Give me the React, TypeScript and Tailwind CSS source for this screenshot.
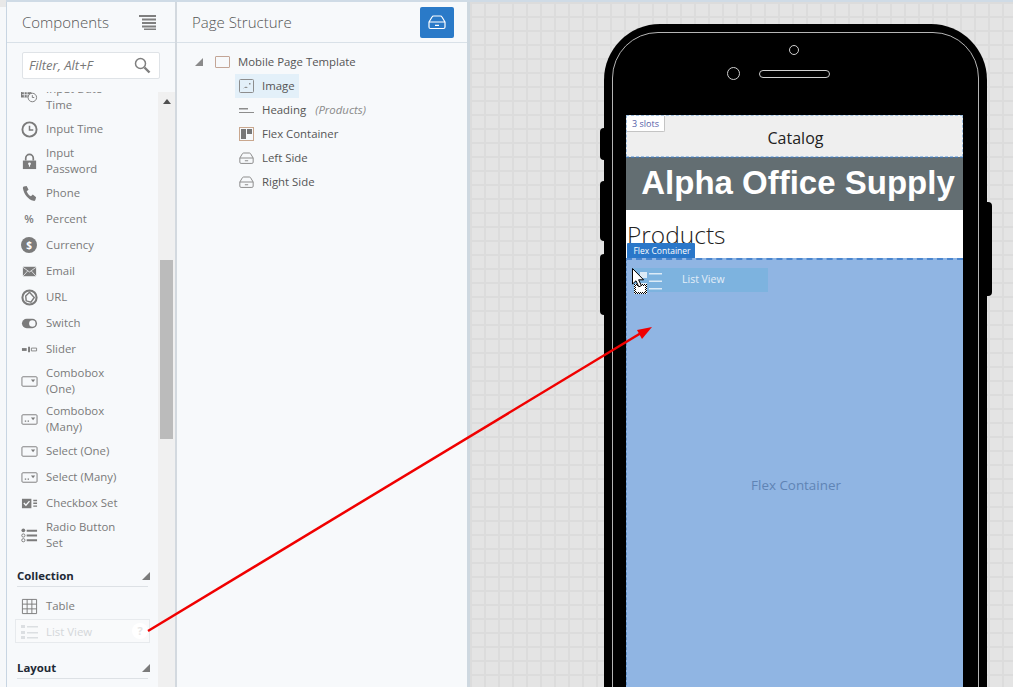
import type { ReactNode } from "react";

const GRAY = "#7b7b7b";

function Icon({ children }: { children: ReactNode }) {
  return (
    <svg width="17" height="17" viewBox="0 0 18 18" className="shrink-0" aria-hidden="true">
      {children}
    </svg>
  );
}

const DropBox = ({ many }: { many?: boolean }) => (
  <Icon>
    <rect x="1" y="4" width="16" height="10" rx="1" fill="none" stroke={GRAY} />
    <path d="M10.500 7h4.500l-2.200 2.800z" fill={GRAY} />
    {many ? <path d="M4 10h1.500v1.500H4zM7 10h1.500v1.500H7z" fill={GRAY} /> : null}
  </Icon>
);

const icons: Record<string, ReactNode> = {
  date: (
    <Icon>
      <path d="M0 0h11v9H0z" fill={GRAY} />
      <path d="M1 3h9M3.500 3v6M6.500 3v6M1 6h9" stroke="#f7f9fb" strokeWidth="0.8" />
      <circle cx="12" cy="9" r="4.500" fill="#f7f9fb" stroke={GRAY} />
      <path d="M12 6.500V9h2" fill="none" stroke={GRAY} />
    </Icon>
  ),
  time: (
    <Icon>
      <circle cx="9" cy="9" r="7.500" fill="none" stroke={GRAY} strokeWidth="2" />
      <path d="M9 5v4.500h4" fill="none" stroke={GRAY} strokeWidth="1.600" />
    </Icon>
  ),
  lock: (
    <Icon>
      <path d="M5 8V5.500a4 4 0 0 1 8 0V8" fill="none" stroke={GRAY} strokeWidth="1.800" />
      <path d="M2 8h14v9H2z" fill={GRAY} />
      <circle cx="9" cy="11.500" r="1.500" fill="#f7f9fb" />
      <path d="M8.400 12h1.200v2.500H8.400z" fill="#f7f9fb" />
    </Icon>
  ),
  phone: (
    <Icon>
      <path d="M3 1.500 6 1l2 4-2 1.500c.8 2.400 2.400 4.300 4.500 5.500L12.500 10l3.500 3-.8 3c-.3.8-1.200 1-2 .8C7.500 15.500 3 9.500 2 3.500c-.1-1 .2-1.700 1-2z" fill={GRAY} />
    </Icon>
  ),
  percent: (
    <span className="flex w-[16px] shrink-0 justify-center text-[11px] font-semibold text-[#7b7b7b]">%</span>
  ),
  currency: (
    <span className="flex h-[16px] w-[16px] shrink-0 items-center justify-center rounded-full bg-[#7b7b7b] text-[10px] font-bold text-white">
      $
    </span>
  ),
  email: (
    <Icon>
      <path d="M2 4h14v10H2z" fill={GRAY} />
      <path d="m2 4.500 7 5 7-5M2 14l5-5.500M16 14l-5-5.500" fill="none" stroke="#f7f9fb" strokeWidth="0.8" />
    </Icon>
  ),
  url: (
    <Icon>
      <circle cx="9" cy="9" r="7.500" fill="none" stroke={GRAY} strokeWidth="2.200" />
      <path d="M9 3.500 14 9l-3.500 5-5-1.500-.5-5z" fill="none" stroke={GRAY} strokeWidth="1.500" />
    </Icon>
  ),
  switch: (
    <Icon>
      <rect x="1" y="4" width="16" height="10" rx="5" fill={GRAY} />
      <circle cx="12" cy="9" r="3.400" fill="#f7f9fb" />
    </Icon>
  ),
  slider: (
    <Icon>
      <path d="M1 7.500h5v3H1z" fill={GRAY} />
      <path d="M7.500 6h2v6h-2z" fill={GRAY} />
      <path d="M11 7.500h5.500v3H11z" fill="none" stroke={GRAY} strokeWidth="0.9" />
    </Icon>
  ),
  combo: <DropBox />,
  comboMany: <DropBox many />,
  checkbox: (
    <Icon>
      <path d="M1 4h10v10H1z" fill={GRAY} />
      <path d="m3 8.500 2.200 2.300L9 6.500" fill="none" stroke="#f7f9fb" strokeWidth="1.400" />
      <path d="M13 5h4v1.500h-4zM13 8h4v1.500h-4zM13 11h4v1.500h-4z" fill={GRAY} />
    </Icon>
  ),
  radio: (
    <Icon>
      <circle cx="2.500" cy="3.500" r="2" fill={GRAY} />
      <circle cx="2.500" cy="9" r="1.700" fill="none" stroke={GRAY} />
      <circle cx="2.500" cy="14" r="1.700" fill="none" stroke={GRAY} />
      <path d="M6 3h11v2H6zM6 8h11v2H6zM6 13h11v2H6z" fill={GRAY} />
    </Icon>
  ),
  table: (
    <Icon>
      <path d="M1.500 1.500h15v15h-15zM1.500 6.500h15M1.500 11.500h15M6.500 1.500v15M11.500 1.500v15" fill="none" stroke={GRAY} />
    </Icon>
  ),
};

const items = [
  { icon: "date", lines: ["Input Date", "Time"] },
  { icon: "time", lines: ["Input Time"] },
  { icon: "lock", lines: ["Input", "Password"] },
  { icon: "phone", lines: ["Phone"] },
  { icon: "percent", lines: ["Percent"] },
  { icon: "currency", lines: ["Currency"] },
  { icon: "email", lines: ["Email"] },
  { icon: "url", lines: ["URL"] },
  { icon: "switch", lines: ["Switch"] },
  { icon: "slider", lines: ["Slider"] },
  { icon: "combo", lines: ["Combobox", "(One)"] },
  { icon: "comboMany", lines: ["Combobox", "(Many)"] },
  { icon: "combo", lines: ["Select (One)"] },
  { icon: "comboMany", lines: ["Select (Many)"] },
  { icon: "checkbox", lines: ["Checkbox Set"] },
  { icon: "radio", lines: ["Radio Button", "Set"] },
];

function ComponentRow({ icon, lines }: { icon: string; lines: string[] }) {
  return (
    <div
      className={
        lines.length > 1
          ? "flex h-[38px] items-center gap-[7px] pl-[14px] text-[11.4px] leading-4 text-[#7a7a7a]"
          : "flex h-[26px] items-center gap-[7px] pl-[14px] text-[11.4px] leading-4 text-[#7a7a7a]"
      }
    >
      <span className="flex w-[18px] shrink-0 justify-start">{icons[icon]}</span>
      <div>
        {lines.map((line) => (
          <div key={line}>{line}</div>
        ))}
      </div>
    </div>
  );
}

function SectionHeading({ label }: { label: string }) {
  return (
    <div className="ml-[10px] flex h-[22px] w-[131px] items-center justify-between border-b border-[#dde1e5] pt-[1px] text-[11.4px] font-bold text-[#1f2a36]">
      <span>{label}</span>
      <svg width="8" height="8" viewBox="0 0 8 8" className="-mr-[2px]" aria-hidden="true">
        <path d="M8 0v8H0z" fill="#7b7b7b" />
      </svg>
    </div>
  );
}

function InboxIcon({ color, size }: { color: string; size: number }) {
  return (
    <svg width={size} height={size} viewBox="0 0 18 18" aria-hidden="true">
      <path
        d="M1 9 4 4q.5-1 1.500-1h7q1 0 1.500 1l3 5v5q0 1.500-1.500 1.500h-13Q1 15.500 1 14zM1 9h16M7 12.300h4"
        fill="none"
        stroke={color}
        strokeWidth="1.200"
        strokeLinejoin="round"
      />
    </svg>
  );
}

const treeIcons: Record<string, ReactNode> = {
  image: (
    <svg width="15" height="14" viewBox="0 0 15 14" aria-hidden="true">
      <rect x="0.500" y="0.500" width="14" height="13" rx="1" fill="none" stroke="#8d8d8d" />
      <path d="M4 9.500 7 7.500l2 1.500H4zM10 4h1.500v1.500H10z" fill="#8d8d8d" />
    </svg>
  ),
  heading: (
    <svg width="15" height="14" viewBox="0 0 15 14" aria-hidden="true">
      <path d="M0 5h9v1.500H0zM0 9h15v1H0z" fill="#8d8d8d" />
    </svg>
  ),
  flex: (
    <svg width="15" height="14" viewBox="0 0 15 14" aria-hidden="true">
      <rect x="0.500" y="0.500" width="14" height="13" fill="none" stroke="#c9a78e" />
      <path d="M2 2h5v10H2zM8 2h5v5H8z" fill="#777" />
    </svg>
  ),
  inbox: <InboxIcon color="#8d8d8d" size={18} />,
};

const treeRows = [
  { icon: "image", label: "Image", selected: true },
  { icon: "heading", label: "Heading", note: "(Products)" },
  { icon: "flex", label: "Flex Container" },
  { icon: "inbox", label: "Left Side" },
  { icon: "inbox", label: "Right Side" },
];

function ComponentsPanel() {
  return (
    <aside className="flex h-full w-[169px] shrink-0 flex-col border-l border-[#c8d5e2] bg-[#f7f9fb]">
      <header className="flex h-[41px] shrink-0 items-center justify-between border-b border-[#d9e1e8] pl-[15px] pr-[19px] pt-[1px]">
        <span className="text-[15px] font-light text-[#555]">Components</span>
        <svg width="17" height="15" viewBox="0 0 17 15" aria-hidden="true">
          <path d="M0 0h17v2H0zM3 3.500h14v2H3zM3 7h14v2H3zM3 10.500h14v2H3zM5 13.500h12v1.500H5z" fill="#7f7f7f" />
        </svg>
      </header>
      <div className="h-[49px] shrink-0 pl-[15px] pt-[9px]">
        <div className="flex h-[27px] w-[138px] items-center justify-between rounded-[2px] border border-[#dfe3e7] bg-white pl-[6px] pr-[8px]">
          <span className="text-[13px] italic text-[#777]">Filter, Alt+F</span>
          <svg width="17" height="17" viewBox="0 0 17 17" aria-hidden="true">
            <circle cx="6.500" cy="6.500" r="5" fill="none" stroke="#7f7f7f" strokeWidth="1.500" />
            <path d="m10.500 10.500 5 5" stroke="#7f7f7f" strokeWidth="2.400" />
          </svg>
        </div>
      </div>
      <div className="flex min-h-0 flex-1">
        <div className="min-w-0 flex-1 overflow-hidden">
          <div className="-mt-[14px]">
            {items.map((item) => (
              <ComponentRow key={item.lines.join(" ") + item.icon} {...item} />
            ))}
            <div className="mt-[11px]">
              <SectionHeading label="Collection" />
            </div>
            <div className="mt-[6px]">
              <ComponentRow icon="table" lines={["Table"]} />
            </div>
            <div className="relative ml-[8px] flex h-[24px] w-[135px] items-center gap-[7px] border border-[#e7eaed] bg-[#f9fafb] pl-[5px] pt-[1px] text-[11.4px] text-[#d4d7da]">
              <svg width="18" height="18" viewBox="0 0 18 18" aria-hidden="true">
                <path d="M0 2h4v3H0zM0 8h4v3H0zM0 13h4v3H0zM6 3h11v1.500H6zM6 9h11v1.500H6zM6 14h11v1.500H6z" fill="#dcdfe2" />
              </svg>
              <span>List View</span>
              <span className="absolute right-[1px] top-[3px] flex h-[16px] w-[16px] items-center justify-center rounded-full bg-white text-[11px] font-bold text-[#e6e6e6]">
                ?
              </span>
            </div>
            <div className="mt-[14px]">
              <SectionHeading label="Layout" />
            </div>
          </div>
        </div>
        <div className="flex w-[17px] shrink-0 flex-col items-center bg-[#f0f0f0]">
          <svg width="8" height="5" viewBox="0 0 8 5" className="mt-[7px]" aria-hidden="true">
            <path d="M4 0 8 5H0z" fill="#505050" />
          </svg>
          <div className="mt-[156px] h-[179px] w-[13px] bg-[#bbbbbb]" />
        </div>
      </div>
    </aside>
  );
}

function PageStructurePanel() {
  return (
    <section className="flex h-full w-[295px] shrink-0 flex-col border-l-2 border-r-[3px] border-l-[#d3d9df] border-r-[#ced8e0] bg-[#f7f9fb]">
      <header className="flex h-[41px] shrink-0 items-center justify-between border-b border-[#d9e1e8] pl-[15px] pr-[13px]">
        <span className="pt-[1px] text-[15px] font-light text-[#555]">Page Structure</span>
        <button
          type="button"
          className="flex h-[31px] w-[34px] items-center justify-center rounded-[2px] bg-[#2a7ac8]"
        >
          <InboxIcon color="#ffffff" size={18} />
        </button>
      </header>
      <div className="pt-[7px] text-[11.4px] text-[#555]">
        <div className="flex h-[24px] items-center pl-[18px]">
          <svg width="8" height="8" viewBox="0 0 8 8" aria-hidden="true">
            <path d="M8 0v8H0z" fill="#8a8a8a" />
          </svg>
          <span className="ml-[12px] h-[12px] w-[15px] rounded-[1px] border border-[#c3a596]" />
          <span className="ml-[8px]">Mobile Page Template</span>
        </div>
        {treeRows.map((row) => (
          <div key={row.label} className="flex h-[24px] items-center pl-[58px]">
            <div
              className={
                row.selected
                  ? "flex h-[24px] items-center gap-[8px] bg-[#e3f0f9] pl-[4px] pr-[4px]"
                  : "flex h-[24px] items-center gap-[8px] pl-[4px]"
              }
            >
              <span className="flex w-[15px] justify-center">{treeIcons[row.icon]}</span>
              <span>{row.label}</span>
              {row.note ? <span className="ml-[1px] italic text-[#8a8a8a]">{row.note}</span> : null}
            </div>
          </div>
        ))}
      </div>
    </section>
  );
}

function PhonePreview() {
  return (
    <div className="relative ml-[134px] mt-[22px] h-[700px] w-[383px] rounded-t-[56px] bg-black">
      {/* side buttons */}
      <div className="absolute -left-[4px] top-[104px] h-[32px] w-[6px] rounded-l-[4px] bg-black" />
      <div className="absolute -left-[4px] top-[157px] h-[60px] w-[6px] rounded-l-[4px] bg-black" />
      <div className="absolute -left-[4px] top-[230px] h-[61px] w-[6px] rounded-l-[4px] bg-black" />
      <div className="absolute -right-[5px] top-[178px] h-[94px] w-[7px] rounded-r-[4px] bg-black" />
      {/* inner bezel line */}
      <div className="absolute left-[8px] right-[8px] top-[8px] h-[680px] rounded-t-[46px] border border-[#b5b5b5]" />
      {/* camera, sensor and speaker */}
      <div className="absolute left-[185px] top-[21px] h-[10px] w-[10px] rounded-full border border-[#cfcfcf]" />
      <div className="absolute left-[123px] top-[43px] h-[13px] w-[13px] rounded-full border border-[#cfcfcf]" />
      <div className="absolute left-[155px] top-[46px] h-[8px] w-[71px] rounded-full border border-[#cfcfcf]" />
      {/* screen */}
      <div className="absolute left-[22px] top-[91px] flex h-[600px] w-[337px] flex-col bg-white">
        <div className="relative flex h-[42px] shrink-0 items-center justify-center border border-dashed border-[#9fbfe0] bg-[#efefef] text-[16px] text-[#222]">
          <span className="pt-[4px] pl-[2px]">Catalog</span>
          <span className="absolute left-0 top-0 flex h-[16px] w-[38px] items-center justify-center rounded-br-[2px] border-b border-r border-[#c4c4c4] bg-white text-[9px] text-[#5560a8]">
            3 slots
          </span>
        </div>
        <div className="flex h-[53px] shrink-0 items-center justify-center border-t border-dashed border-[#4a78ac] bg-[#636e72] pb-[2px] pl-[7px] font-['Liberation_Sans',Arial,sans-serif] text-[33px] font-bold text-white">
          Alpha Office Supply
        </div>
        <div className="relative h-[48px] shrink-0 bg-white pl-[1px] pt-[7px] text-[24.5px] font-light leading-[35px] text-[#222]">
          Products
          <span className="absolute bottom-0 left-[1px] flex h-[15px] w-[68px] items-center justify-center rounded-t-[1px] bg-[#2a77c9] pl-[2px] pt-[2px] text-[8.5px] font-normal leading-none text-white">
            Flex Container
          </span>
        </div>
        <div className="relative flex-1 border-l border-t-2 border-dashed border-[#4a86cf] bg-[#90b5e3] [border-left-color:#5f8fc8]">
          <div className="absolute left-[6px] top-[8px] flex h-[24px] w-[135px] items-center bg-[#7db3df] text-[10.500px] text-[#e3eef8]">
            <svg width="30" height="24" viewBox="0 0 30 24" className="ml-[1px]" aria-hidden="true">
              <path d="M6 4h7v6H6zM6 15h7v6H6z" fill="#dcebf7" />
              <path d="M15 5h13v1.500H15zM15 12.500h13V14H15zM15 20h13v1.500H15z" fill="#dcebf7" />
            </svg>
            <span className="ml-[18px]">List View</span>
          </div>
          <span className="absolute left-0 right-0 top-[215px] pl-[2px] text-center text-[13.400px] text-[#5f84b5]">
            Flex Container
          </span>
          {/* drag cursor */}
          <svg width="18" height="27" viewBox="0 0 18 27" className="absolute left-[5px] top-[8px]" aria-hidden="true">
            <defs>
              <pattern id="drag-checker" width="2" height="2" patternUnits="userSpaceOnUse">
                <rect width="2" height="2" fill="#fff" />
                <rect width="1" height="1" fill="#000" />
                <rect x="1" y="1" width="1" height="1" fill="#000" />
              </pattern>
            </defs>
            <rect x="2" y="16" width="13" height="10" fill="url(#drag-checker)" />
            <rect x="4" y="18" width="9" height="6" fill="#fff" />
            <path d="M.5.500v15.500l3.500-3.200 2.800 6 2.600-1.200-2.800-5.800h5z" fill="#fff" stroke="#000" />
          </svg>
        </div>
      </div>
    </div>
  );
}

export default function App() {
  return (
    <div className="relative flex h-[687px] w-[1013px] overflow-hidden bg-[#f6f8fa] font-['Open_Sans',sans-serif]">
      <div className="h-full w-[6px] shrink-0">
        <div className="h-[7px] bg-[#e8e8e8]" />
      </div>
      <div className="flex h-full min-w-0 flex-1 flex-col">
        <div className="h-[2px] shrink-0 bg-[#cfdbe6]" />
        <div className="flex min-h-0 flex-1">
          <ComponentsPanel />
          <PageStructurePanel />
          <main className="min-w-0 flex-1 overflow-hidden bg-[#e4e4e4] bg-[linear-gradient(#dcdcdc_2px,transparent_2px),linear-gradient(90deg,#dcdcdc_2px,transparent_2px)] bg-[size:14px_14px]">
            <PhonePreview />
          </main>
        </div>
      </div>
      {/* drag arrow drawn over the panels */}
      <svg width="1013" height="687" className="pointer-events-none absolute left-0 top-0" aria-hidden="true">
        <path d="M148 631 641 333" stroke="#f00000" strokeWidth="2.500" />
        <path d="m652 327-15 3 5 9z" fill="#f00000" />
      </svg>
    </div>
  );
}
